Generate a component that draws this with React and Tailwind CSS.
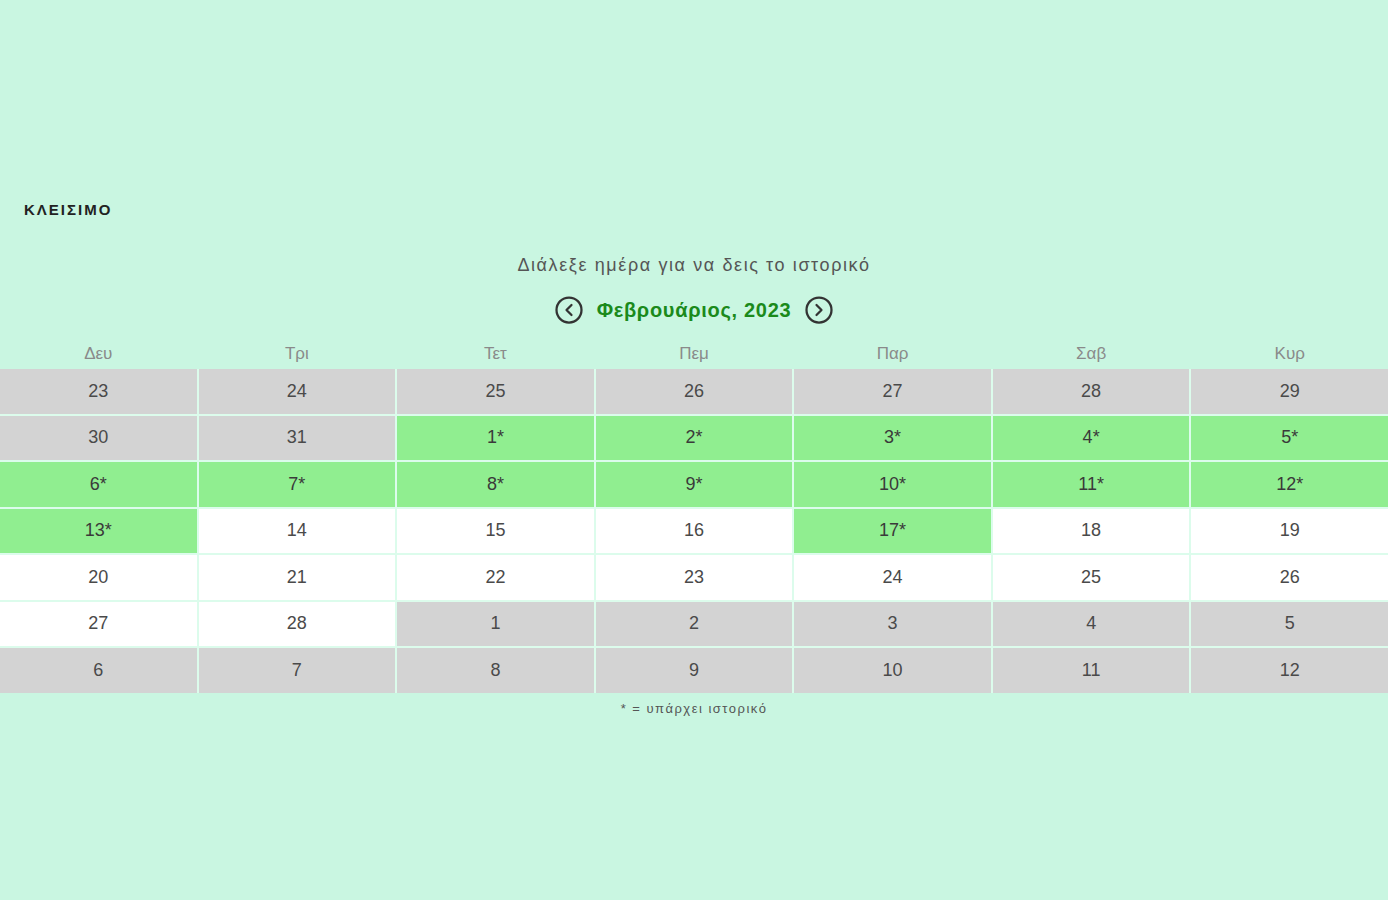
import { CircleChevronLeft, CircleChevronRight } from "lucide-react";

const weekDays = ["Δευ", "Τρι", "Τετ", "Πεμ", "Παρ", "Σαβ", "Κυρ"];

// kind: "out" = other month, "hist" = has history, "day" = plain day
const buildDays = () => {
  const days = [];
  [23, 24, 25, 26, 27, 28, 29, 30, 31].forEach((d) => days.push({ d, kind: "out" }));
  const withHistory = [1, 2, 3, 4, 5, 6, 7, 8, 9, 10, 11, 12, 13, 17];
  for (let d = 1; d <= 28; d++) {
    days.push({ d, kind: withHistory.includes(d) ? "hist" : "day" });
  }
  for (let d = 1; d <= 12; d++) days.push({ d, kind: "out" });
  return days;
};

const cellStyles = {
  out: "bg-[#d3d3d3] text-[#4a4a4a]",
  hist: "bg-[#90ee90] text-[#3a3a3a]",
  day: "bg-white text-[#4a4a4a]",
};

export default function App() {
  const days = buildDays();

  return (
    <div className="min-h-[900px] bg-[#c9f6e1] font-['Liberation_Sans',Arial,sans-serif]">
      <div className="pt-[198px] pl-6">
        <button className="text-[15px] font-semibold tracking-[2px] text-[#222] leading-[18px]">
          ΚΛΕΙΣΙΜΟ
        </button>
      </div>

      <div className="flex flex-col items-center mt-[31px]">
        <p className="text-[18px] tracking-[1.6px] text-[#555] leading-6">
          Διάλεξε ημέρα για να δεις το ιστορικό
        </p>
        <div className="flex items-center gap-[13px] mt-[18px]">
          <button className="text-[#333]">
            <CircleChevronLeft className="h-[30px] w-[30px]" strokeWidth={1.8} />
          </button>
          <span className="text-[20px] font-semibold tracking-[0.7px] text-[#1b8a1b] leading-6">
            Φεβρουάριος, 2023
          </span>
          <button className="text-[#333]">
            <CircleChevronRight className="h-[30px] w-[30px]" strokeWidth={1.8} />
          </button>
        </div>
      </div>

      <div className="grid grid-cols-7 gap-x-[2px] mt-[18px]">
        {weekDays.map((w) => (
          <div key={w} className="text-center text-[17px] text-[#8a8a8a] leading-[22px] pb-[4px]">
            {w}
          </div>
        ))}
      </div>

      <div className="grid grid-cols-7 gap-[2px] bg-[#dcfcec]">
        {days.map((day, i) => (
          <div
            key={i}
            className={`h-[44.5px] flex items-center justify-center text-[18px] ${cellStyles[day.kind]}`}
          >
            {day.d}
            {day.kind === "hist" ? "*" : ""}
          </div>
        ))}
      </div>

      <p className="text-center text-[13px] tracking-[1.5px] text-[#555] mt-[6px]">* = υπάρχει ιστορικό</p>
    </div>
  );
}
